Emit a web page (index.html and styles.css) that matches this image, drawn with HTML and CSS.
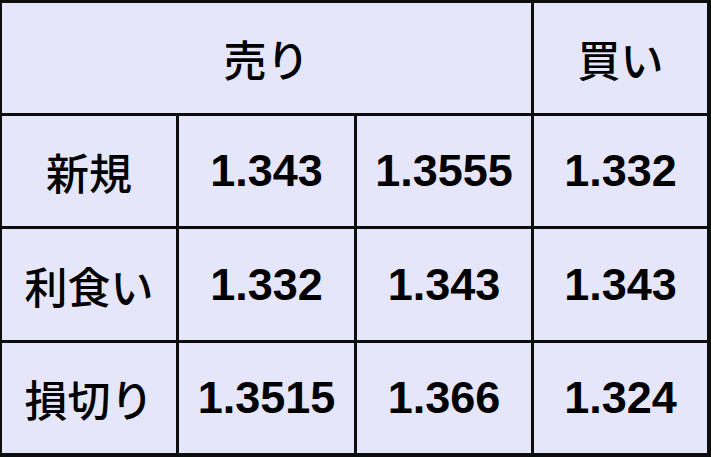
FILE: index.html
```html
<!DOCTYPE html>
<html lang="ja">
<head>
<meta charset="utf-8">
<link rel="stylesheet" href="styles.css">
</head>
<body>
<div class="table">
  <div class="cell head span3">売り</div>
  <div class="cell head">買い</div>
  <div class="cell label">新規</div>
  <div class="cell num">1.343</div>
  <div class="cell num">1.3555</div>
  <div class="cell num">1.332</div>
  <div class="cell label">利食い</div>
  <div class="cell num">1.332</div>
  <div class="cell num">1.343</div>
  <div class="cell num">1.343</div>
  <div class="cell label">損切り</div>
  <div class="cell num">1.3515</div>
  <div class="cell num">1.366</div>
  <div class="cell num">1.324</div>
</div>
</body>
</html>
```
FILE: styles.css
```css
html, body {
  margin: 0;
  padding: 0;
  background: #e6e6fa;
}
.table {
  width: 711px;
  height: 457px;
  box-sizing: border-box;
  display: grid;
  grid-template-columns: 174px 175px 174px 173px;
  grid-template-rows: 110px 110px 111px 110px;
  gap: 3px;
  padding: 3px 4px 4px 2px;
  background: #0d0d0d;
}
.cell {
  background: #e6e6fa;
  display: flex;
  align-items: center;
  justify-content: center;
  color: #000;
  font-size: 45px;
  font-weight: 700;
}
.span3 {
  grid-column: span 3;
}
.head, .label {
  font-family: "Noto Sans CJK JP", sans-serif;
  font-size: 43px;
  font-weight: 500;
}
.num {
  font-family: "Liberation Sans", Arial, sans-serif;
}
```
